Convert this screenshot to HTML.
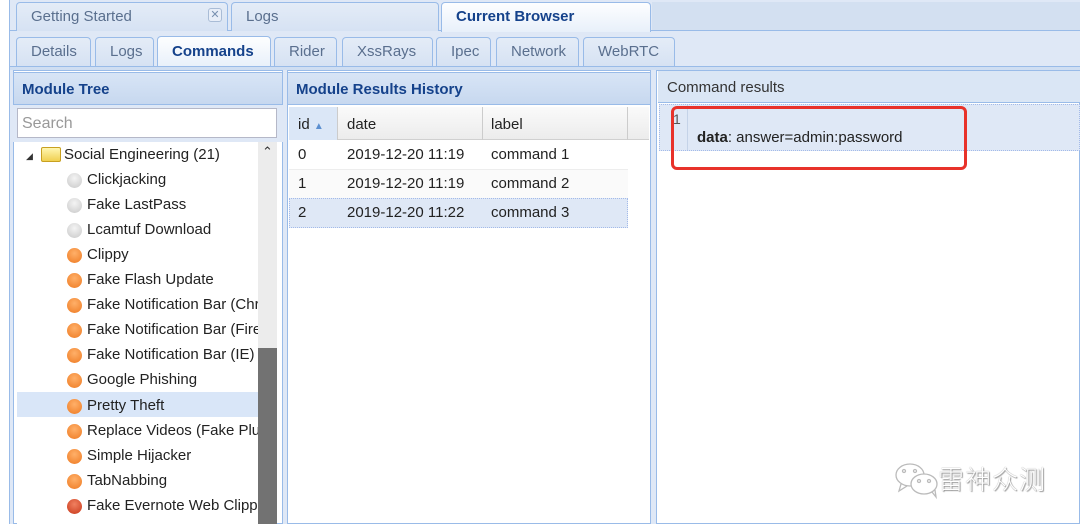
<!DOCTYPE html><html><head><meta charset="utf-8"><style>
*{box-sizing:border-box;margin:0;padding:0}
body{width:1080px;height:524px;overflow:hidden;background:#dfe8f6;font-family:"Liberation Sans",Arial,sans-serif;font-size:14px;color:#222;position:relative}
.a{position:absolute}
.tab{position:absolute;border:1px solid #99bbe8;border-bottom:none;border-radius:4px 4px 0 0;background:linear-gradient(#e4ecf7,#d6e2f3);color:#5a6f8e;font-size:15px;padding-left:14px}
.tab.on{background:linear-gradient(#fdfeff,#e8f0fa);color:#15428b;font-weight:bold}
.ph{position:absolute;background:linear-gradient(#d8e5f6,#c7d8ef);border:1px solid #99bbe8;color:#15428b;font-weight:bold;font-size:15px;padding-left:8px;line-height:33px}
.row{position:absolute;left:24px;height:25px;line-height:27px;font-size:15px;color:#222;width:234px;padding-left:63px;white-space:nowrap;overflow:hidden}
.dot{position:absolute;left:43px;top:7px;width:15px;height:15px;border-radius:50%}
.g{background:radial-gradient(circle at 50% 35%,#f4f4f4,#c8c8c8)}
.o{background:radial-gradient(circle at 50% 35%,#ffb069,#ee7a22)}
.r{background:radial-gradient(circle at 50% 35%,#f08060,#c8381a)}
.gc{position:absolute;font-size:15px;line-height:30px;padding-left:9px}
</style></head><body>
<div class="a" style="left:0;top:0;width:10px;height:524px;background:#fff;border-right:1px solid #99bbe8"></div>
<div class="a" style="left:10px;top:30px;width:1070px;height:494px;background:#dfe8f6;border-top:1px solid #99bbe8"></div>
<div class="tab" style="left:16px;top:2px;width:212px;height:29px;line-height:27px">Getting Started<span style="position:absolute;left:191px;top:5px;width:14px;height:14px;border:1px solid #a9bcd6;border-radius:3px;font-size:11px;line-height:12px;text-align:center;color:#7890b0;background:#e8eef8">✕</span></div>
<div class="tab" style="left:231px;top:2px;width:208px;height:29px;line-height:27px">Logs</div>
<div class="tab on" style="left:441px;top:2px;width:210px;height:30px;line-height:27px">Current Browser</div>
<div class="a" style="left:652px;top:2px;width:428px;height:28px;background:#d3e0f1"></div>
<div class="tab" style="left:16px;top:37px;width:75px;height:29px;line-height:27px">Details</div>
<div class="tab" style="left:95px;top:37px;width:59px;height:29px;line-height:27px">Logs</div>
<div class="tab on" style="left:157px;top:36px;width:114px;height:31px;line-height:29px">Commands</div>
<div class="tab" style="left:274px;top:37px;width:63px;height:29px;line-height:27px">Rider</div>
<div class="tab" style="left:342px;top:37px;width:91px;height:29px;line-height:27px">XssRays</div>
<div class="tab" style="left:436px;top:37px;width:55px;height:29px;line-height:27px">Ipec</div>
<div class="tab" style="left:496px;top:37px;width:83px;height:29px;line-height:27px">Network</div>
<div class="tab" style="left:583px;top:37px;width:92px;height:29px;line-height:27px">WebRTC</div>
<div class="a" style="left:10px;top:66px;width:1070px;height:4px;background:#cfdef2;border-top:1px solid #99bbe8"></div>

<div class="a" style="left:13px;top:70px;width:270px;height:454px;background:#fff;border:1px solid #99bbe8"></div>
<div class="ph" style="left:13px;top:72px;width:270px;height:33px">Module Tree</div>
<div class="a" style="left:13px;top:105px;width:270px;height:37px;background:#dfe8f6"></div>
<div class="a" style="left:17px;top:108px;width:260px;height:30px;background:#fff;border:1px solid #b5b8c8;color:#999;font-size:16px;line-height:30px;padding-left:4px">Search</div>
<div class="a" style="left:17px;top:142px;width:260px;height:382px;background:#fff"></div>
<div class="a" style="left:258px;top:142px;width:19px;height:382px;background:#ececec"></div>
<div class="a" style="left:258px;top:348px;width:19px;height:176px;background:#727272"></div>
<div class="a" style="left:262px;top:144px;font-size:13px;color:#333">⌃</div>
<div class="a" style="left:26px;top:151px;font-size:9px;color:#333">◢</div>
<div class="a" style="left:41px;top:147px;width:20px;height:15px;background:linear-gradient(#fff6b0,#f0d050);border:1px solid #c8a020;border-radius:2px"></div>
<div class="row" style="top:141px;left:24px;padding-left:40px">Social Engineering (21)</div>
<div class="row" style="top:166px"><span class="dot g"></span>Clickjacking</div>
<div class="row" style="top:191px"><span class="dot g"></span>Fake LastPass</div>
<div class="row" style="top:216px"><span class="dot g"></span>Lcamtuf Download</div>
<div class="row" style="top:241px"><span class="dot o"></span>Clippy</div>
<div class="row" style="top:266px"><span class="dot o"></span>Fake Flash Update</div>
<div class="row" style="top:291px"><span class="dot o"></span>Fake Notification Bar (Chrome)</div>
<div class="row" style="top:316px"><span class="dot o"></span>Fake Notification Bar (Firefox)</div>
<div class="row" style="top:341px"><span class="dot o"></span>Fake Notification Bar (IE)</div>
<div class="row" style="top:366px"><span class="dot o"></span>Google Phishing</div>
<div class="row" style="top:392px;left:17px;width:241px;padding-left:70px;background:#d9e6f8"><span class="dot o" style="left:50px"></span>Pretty Theft</div>
<div class="row" style="top:417px"><span class="dot o"></span>Replace Videos (Fake Plugin)</div>
<div class="row" style="top:442px"><span class="dot o"></span>Simple Hijacker</div>
<div class="row" style="top:467px"><span class="dot o"></span>TabNabbing</div>
<div class="row" style="top:492px"><span class="dot r"></span>Fake Evernote Web Clipper</div>

<div class="a" style="left:287px;top:70px;width:364px;height:454px;background:#fff;border:1px solid #99bbe8"></div>
<div class="ph" style="left:287px;top:72px;width:364px;height:33px">Module Results History</div>
<div class="a" style="left:289px;top:107px;width:360px;height:33px;background:linear-gradient(#fafafa,#ececec);border-bottom:1px solid #d0d0d0"></div>
<div class="a" style="left:289px;top:107px;width:49px;height:33px;background:#dbe7f7;border-right:1px solid #ccc"></div>
<div class="gc" style="left:289px;top:109px;line-height:31px">id <span style="color:#5b8fd0;font-size:10px">▲</span></div>
<div class="gc" style="left:338px;top:109px;line-height:31px">date</div>
<div class="a" style="left:482px;top:107px;width:1px;height:33px;background:#ccc"></div>
<div class="gc" style="left:482px;top:109px;line-height:31px">label</div>
<div class="a" style="left:627px;top:107px;width:1px;height:33px;background:#ccc"></div>
<div class="a" style="left:289px;top:169px;width:339px;height:29px;background:#fafafa;border-top:1px solid #ededed"></div>
<div class="a" style="left:289px;top:198px;width:339px;height:30px;background:#dfe8f6;border:1px dotted #a3bae9"></div>
<div class="gc" style="left:289px;top:140px">0</div><div class="gc" style="left:338px;top:140px">2019-12-20 11:19</div><div class="gc" style="left:482px;top:140px">command 1</div>
<div class="gc" style="left:289px;top:169px">1</div><div class="gc" style="left:338px;top:169px">2019-12-20 11:19</div><div class="gc" style="left:482px;top:169px">command 2</div>
<div class="gc" style="left:289px;top:198px">2</div><div class="gc" style="left:338px;top:198px">2019-12-20 11:22</div><div class="gc" style="left:482px;top:198px">command 3</div>

<div class="a" style="left:656px;top:70px;width:424px;height:454px;background:#fff;border:1px solid #99bbe8"></div>
<div class="a" style="left:658px;top:71px;width:422px;height:32px;background:#dae6f5;border-bottom:1px solid #99bbe8;color:#333;font-size:15px;line-height:34px;padding-left:9px">Command results</div>
<div class="a" style="left:659px;top:104px;width:421px;height:47px;background:#dfe8f6;border:1px dotted #a3bae9"></div>
<div class="a" style="left:687px;top:105px;width:1px;height:45px;background:#c5d3e8"></div>
<div class="a" style="left:673px;top:111px;font-size:14px;color:#555">1</div>
<div class="a" style="left:697px;top:129px;font-size:15px"><b>data</b>: answer=admin:password</div>
<div class="a" style="left:671px;top:106px;width:296px;height:64px;border:3px solid #e8322a;border-radius:6px"></div>

<div class="a" style="left:893px;top:460px;width:52px;height:40px">
<svg width="52" height="40" viewBox="0 0 52 40" fill="none" stroke="#bbb" stroke-width="1.3"><ellipse cx="17" cy="15" rx="14" ry="11"/><path d="M8 24 L6 31 L14 26"/><ellipse cx="31" cy="24" rx="13" ry="10" fill="#fff"/><path d="M39 32 L43 37 L42 30"/><circle cx="11" cy="11" r="1.5"/><circle cx="22" cy="11" r="1.5"/><circle cx="26" cy="21" r="1.5"/><circle cx="36" cy="21" r="1.5"/></svg></div>
<div class="a" style="left:938px;top:460px;font-size:26px;color:#fff;letter-spacing:1px;font-family:'Noto Sans CJK SC',sans-serif;font-weight:300;text-shadow:0 0 1px #888,1px 1px 1px #999">雷神众测</div>
</body></html>
